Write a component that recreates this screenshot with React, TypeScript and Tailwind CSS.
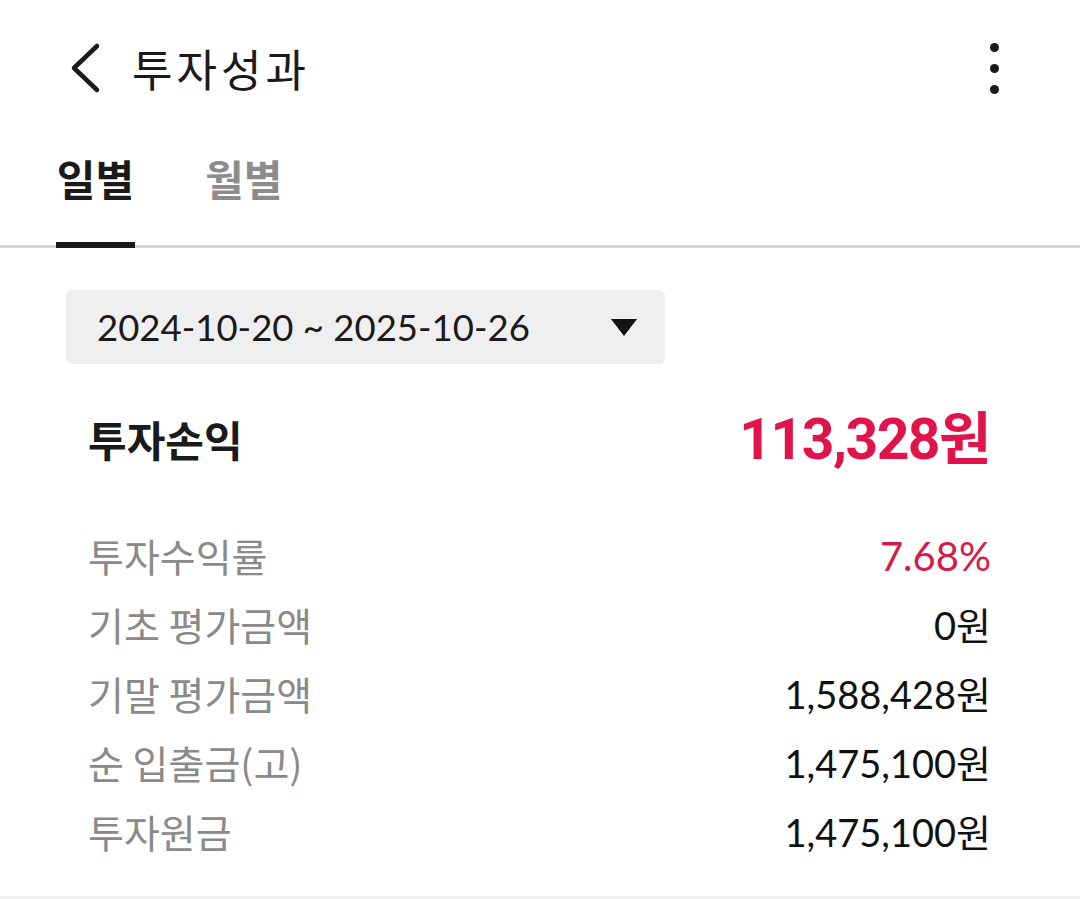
import React from "react";

const KR = { fontFamily: '"Noto Sans CJK KR", "Noto Sans", sans-serif' };
const NUM = { fontFamily: 'Lato, "Noto Sans CJK KR", sans-serif' };

const rows: { label: string; value: string; red?: boolean }[] = [
  { label: "투자수익률", value: "7.68%", red: true },
  { label: "기초 평가금액", value: "0원" },
  { label: "기말 평가금액", value: "1,588,428원" },
  { label: "순 입출금(고)", value: "1,475,100원" },
  { label: "투자원금", value: "1,475,100원" },
];

export default function App() {
  return (
    <div className="w-[1080px] h-[899px] bg-white flex flex-col overflow-hidden" style={KR}>
      {/* header */}
      <div className="h-[136px] flex items-center pl-[66px] pr-[81px] shrink-0">
        <svg width="40" height="52" viewBox="0 0 40 52" className="shrink-0">
          <path d="M31 4 L8 26 L31 48" fill="none" stroke="#1a1a1a" strokeWidth="4.5" strokeLinecap="round" strokeLinejoin="round" />
        </svg>
        <div className="ml-[26px] text-[44px] leading-none text-[#1a1a1a] tracking-[4px]">투자성과</div>
        <div className="ml-auto flex flex-col items-center gap-[12px]">
          <div className="w-[9px] h-[9px] rounded-full bg-[#1a1a1a]" />
          <div className="w-[9px] h-[9px] rounded-full bg-[#1a1a1a]" />
          <div className="w-[9px] h-[9px] rounded-full bg-[#1a1a1a]" />
        </div>
      </div>
      {/* tabs */}
      <div className="h-[112px] flex items-end pl-[56px] border-b-[3px] border-[#d4d4d4] shrink-0">
        <div className="flex flex-col items-center w-[79px] h-full justify-between">
          <div className="mt-[21px] text-[42px] font-bold leading-none text-[#1a1a1a]">일별</div>
          <div className="w-[79px] h-[6px] bg-[#1a1a1a] -mb-[3px]" />
        </div>
        <div className="ml-[70px] h-full flex flex-col">
          <div className="mt-[21px] text-[42px] font-bold leading-none text-[#8c8c8c]">월별</div>
        </div>
      </div>
      {/* date selector */}
      <div className="px-[66px] pt-[42px] shrink-0">
        <div className="w-[599px] h-[74px] bg-[#efefef] rounded-[6px] flex items-center pl-[31px] pr-[28px]">
          <span className="text-[36.5px] text-[#1a1a1a] leading-none" style={NUM}>2024-10-20 ~ 2025-10-26</span>
          <svg width="26" height="17" viewBox="0 0 26 17" className="ml-auto">
            <path d="M0 0 H26 L13 17 Z" fill="#111" />
          </svg>
        </div>
      </div>
      {/* profit */}
      <div className="h-[150px] flex items-center justify-between pl-[88px] pr-[90px] shrink-0">
        <span className="text-[42px] font-bold text-[#1a1a1a] leading-none">투자손익</span>
        <span className="text-[57px] font-bold text-[#e0134a] leading-none tracking-[-1.5px]" style={{ fontFamily: 'Roboto, "Noto Sans CJK KR", sans-serif' }}>113,328원</span>
      </div>
      {/* rows */}
      <div className="flex flex-col pl-[88px] pr-[89px] shrink-0 mt-[7px]">
        {rows.map((r) => (
          <div key={r.label} className="h-[69px] flex items-center justify-between">
            <span className="text-[39px] text-[#8a8a8a] leading-none">{r.label}</span>
            <span
              className={"leading-none " + (r.red ? "text-[40px] text-[#d41c4c]" : "text-[38px] text-[#111]")}
              style={NUM}
            >
              {r.value}
            </span>
          </div>
        ))}
      </div>
      <div className="flex-1" />
      <div className="h-[3px] bg-[#efefef] shrink-0" />
    </div>
  );
}
